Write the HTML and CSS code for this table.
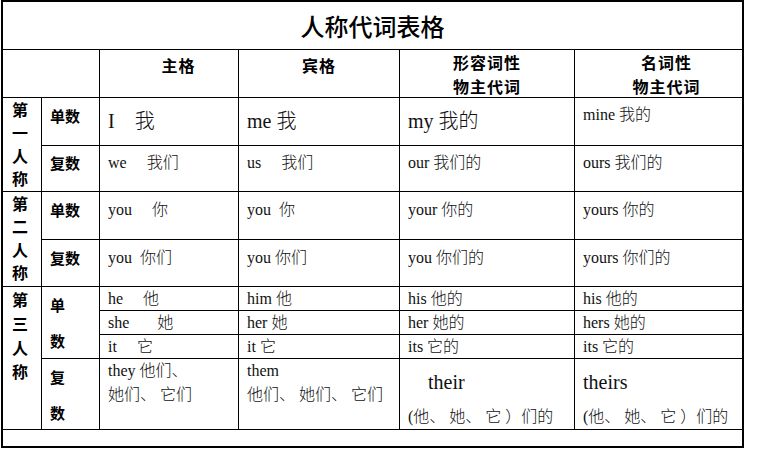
FILE: index.html
```html
<!DOCTYPE html>
<html lang="zh-CN">
<head>
<meta charset="utf-8">
<title>人称代词表格</title>
<link rel="stylesheet" href="styles.css">
</head>
<body>
<div class="sheet">
  <div class="cell title">人称代词表格</div>

  <div class="cell corner"></div>
  <div class="cell head head-one shift-lg">主格</div>
  <div class="cell head head-one">宾格</div>
  <div class="cell head">形容词性<br>物主代词</div>
  <div class="cell head end shift-sm">名词性<br>物主代词</div>

  <div class="cell person span2">第<br>一<br>人<br>称</div>
  <div class="cell label">单数</div>
  <div class="cell big">I    我</div>
  <div class="cell big">me 我</div>
  <div class="cell big">my 我的</div>
  <div class="cell end up">mine 我的</div>

  <div class="cell label up">复数</div>
  <div class="cell up">we     我们</div>
  <div class="cell up">us     我们</div>
  <div class="cell up">our 我们的</div>
  <div class="cell end up">ours 我们的</div>

  <div class="cell person span2">第<br>二<br>人<br>称</div>
  <div class="cell label">单数</div>
  <div class="cell">you     你</div>
  <div class="cell">you  你</div>
  <div class="cell">your 你的</div>
  <div class="cell end">yours 你的</div>

  <div class="cell label">复数</div>
  <div class="cell">you  你们</div>
  <div class="cell">you 你们</div>
  <div class="cell">you 你们的</div>
  <div class="cell end">yours 你们的</div>

  <div class="cell person span4">第<br>三<br>人<br>称</div>
  <div class="cell label tall span3">单<br>数</div>
  <div class="cell thin">he     他</div>
  <div class="cell thin">him 他</div>
  <div class="cell thin">his 他的</div>
  <div class="cell thin end">his 他的</div>

  <div class="cell thin">she       她</div>
  <div class="cell thin">her 她</div>
  <div class="cell thin">her 她的</div>
  <div class="cell thin end">hers 她的</div>

  <div class="cell thin">it     它</div>
  <div class="cell thin">it 它</div>
  <div class="cell thin">its 它的</div>
  <div class="cell thin end">its 它的</div>

  <div class="cell label tall">复<br>数</div>
  <div class="cell plural">they 他们、<br>她们、 它们</div>
  <div class="cell plural">them<br>他们、 她们、 它们</div>
  <div class="cell poss"><span class="poss-en">    their</span><span class="poss-zh">(他、 她、 它 ）们的</span></div>
  <div class="cell poss end"><span class="poss-en">theirs</span><span class="poss-zh">(他、 她、 它 ）们的</span></div>

  <div class="cell foot"></div>
</div>
</body>
</html>
```

FILE: styles.css
```css
html, body {
  margin: 0;
  padding: 0;
  background: #ffffff;
}

.sheet {
  display: grid;
  grid-template-columns: 39px 58px 139px 161px 175px 167px;
  grid-template-rows: 48px 48px 48px 46px 48px 47px 24px 24px 24px 71px 16px;
  width: max-content;
  margin-left: 1px;
  border: 2px solid #000;
  font-family: "Liberation Serif", "Noto Sans CJK SC", serif;
  color: #111;
}

.cell {
  box-sizing: border-box;
  border-right: 1px solid #000;
  border-bottom: 1px solid #000;
  white-space: pre;
  overflow: hidden;
  padding: 8px 0 0 8px;
  font-size: 16px;
  line-height: 20px;
  font-weight: 300;
}

.end {
  border-right: 0;
}

.title {
  grid-column: 1 / -1;
  border-right: 0;
  padding: 0;
  display: flex;
  align-items: center;
  justify-content: center;
  font-family: "Noto Sans CJK SC", sans-serif;
  font-size: 24px;
  font-weight: 500;
  color: #000;
}

.corner {
  grid-column: span 2;
}

.head {
  padding: 0;
  text-align: center;
  font-family: "Noto Sans CJK SC", sans-serif;
  font-size: 16px;
  line-height: 24px;
  font-weight: 700;
  letter-spacing: 1px;
  color: #000;
}

.head-one {
  padding-top: 3px;
}

.shift-lg {
  padding-left: 19px;
}

.shift-sm {
  padding-left: 16px;
}

.person {
  padding: 0 4px 0 0;
  text-align: center;
  font-family: "Noto Sans CJK SC", sans-serif;
  font-size: 16px;
  line-height: 23px;
  font-weight: 700;
  color: #000;
}

.span2 {
  grid-row: span 2;
}

.span3 {
  grid-row: span 3;
}

.span4 {
  grid-row: span 4;
  line-height: 24px;
}

.label {
  font-family: "Noto Sans CJK SC", sans-serif;
  font-size: 15px;
  font-weight: 700;
  color: #000;
}

.tall {
  padding-top: 0;
  line-height: 36px;
}

.up {
  padding-top: 7px;
}

.big {
  font-size: 20px;
  line-height: 30px;
}

.thin {
  padding-top: 0;
  line-height: 23px;
}

.plural {
  padding-top: 0;
  line-height: 24px;
}

.poss {
  padding-top: 10px;
}

.poss-en {
  display: block;
  font-size: 20px;
  line-height: 26px;
}

.poss-zh {
  display: block;
  margin-top: 12px;
  line-height: 20px;
}

.foot {
  grid-column: 1 / -1;
  border: 0;
}
```
